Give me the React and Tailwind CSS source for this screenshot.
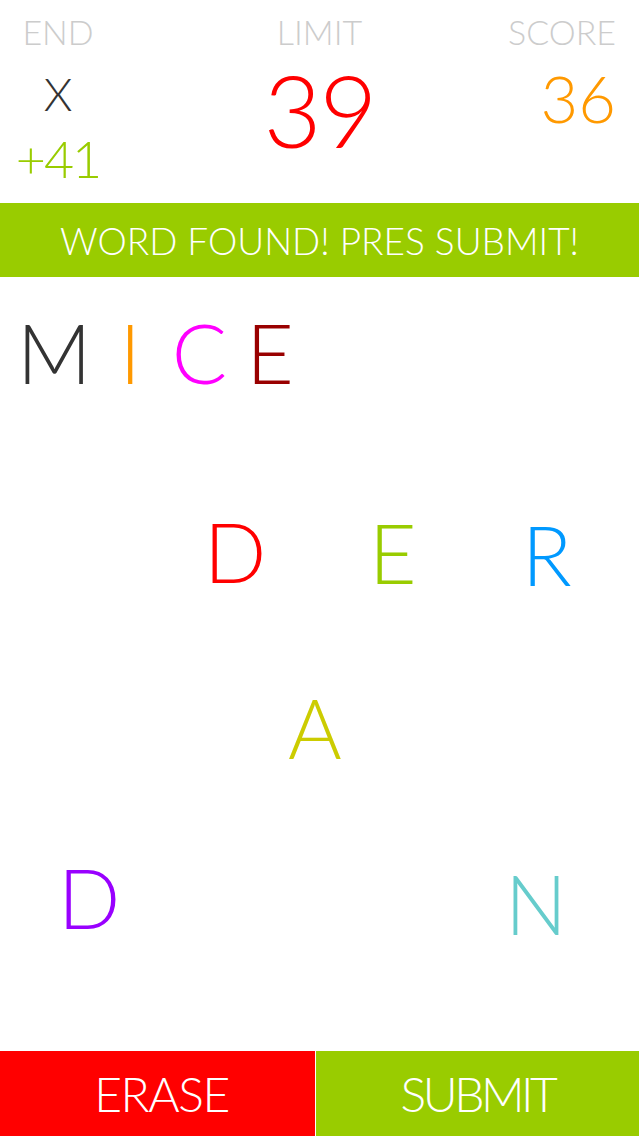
import React from 'react'

const font = { fontFamily: 'Lato, "Noto Sans", sans-serif' }

const scattered = [
  { ch: 'D', cls: 'text-[#ff0000] left-[204px] top-[233px]' },
  { ch: 'E', cls: 'text-[#99cc00] left-[369px] top-[234px]' },
  { ch: 'R', cls: 'text-[#0099ff] left-[522px] top-[236px]' },
  { ch: 'A', cls: 'text-[#cccc00] left-[288px] top-[409px]' },
  { ch: 'D', cls: 'text-[#9900ff] left-[58px] top-[579px]' },
  { ch: 'N', cls: 'text-[#66cccc] left-[505px] top-[585px]' },
]

export default function App() {
  return (
    <div className="w-[639px] h-[1136px] bg-white flex flex-col overflow-hidden font-light" style={font}>
      {/* header */}
      <div className="h-[203px] grid grid-cols-3 pt-[15px]">
        <div className="justify-self-start ml-[19px] w-[78px] flex flex-col items-center">
          <span className="text-[34px] leading-none text-[#cccccc]">END</span>
          <span className="text-[46px] leading-none text-[#333333] mt-[22px]">X</span>
          <span className="text-[52px] leading-none text-[#99cc00] mt-[15px] tracking-[-2px]">+41</span>
        </div>
        <div className="justify-self-center flex flex-col items-center">
          <span className="text-[34px] leading-none text-[#cccccc]">LIMIT</span>
          <span className="text-[100px] leading-none text-[#ff0000] mt-[10px] tracking-[-2px]">39</span>
        </div>
        <div className="justify-self-end mr-[23px] flex flex-col items-end">
          <span className="text-[34px] leading-none text-[#cccccc]">SCORE</span>
          <span className="text-[65px] leading-none text-[#ff9900] mt-[17px]">36</span>
        </div>
      </div>

      {/* status bar */}
      <div className="h-[74px] bg-[#99cc00] flex items-center justify-center">
        <span className="text-[37px] leading-none text-white">WORD FOUND! PRES SUBMIT!</span>
      </div>

      {/* board */}
      <div className="relative flex-1">
        <div className="flex items-start pl-[17px] pt-[34px] text-[82px] leading-none">
          <span className="text-[#333333] tracking-[-4px]">M</span>
          <span className="text-[#ff9900] ml-[32px]">I</span>
          <span className="text-[#ff00ff] ml-[31px]">C</span>
          <span className="text-[#990000] ml-[19px]">E</span>
        </div>
        {scattered.map((l, i) => (
          <span key={i} className={`absolute text-[82px] leading-none ${l.cls}`}>
            {l.ch}
          </span>
        ))}
      </div>

      {/* buttons */}
      <div className="h-[85px] flex">
        <button className="w-[315px] bg-[#ff0000] text-white text-[48px] leading-none font-light tracking-[-1.5px] pl-[8px]">
          ERASE
        </button>
        <div className="w-px bg-white" />
        <button className="flex-1 bg-[#99cc00] text-white text-[48px] leading-none font-light tracking-[-3.5px]">
          SUBMIT
        </button>
      </div>
    </div>
  )
}
